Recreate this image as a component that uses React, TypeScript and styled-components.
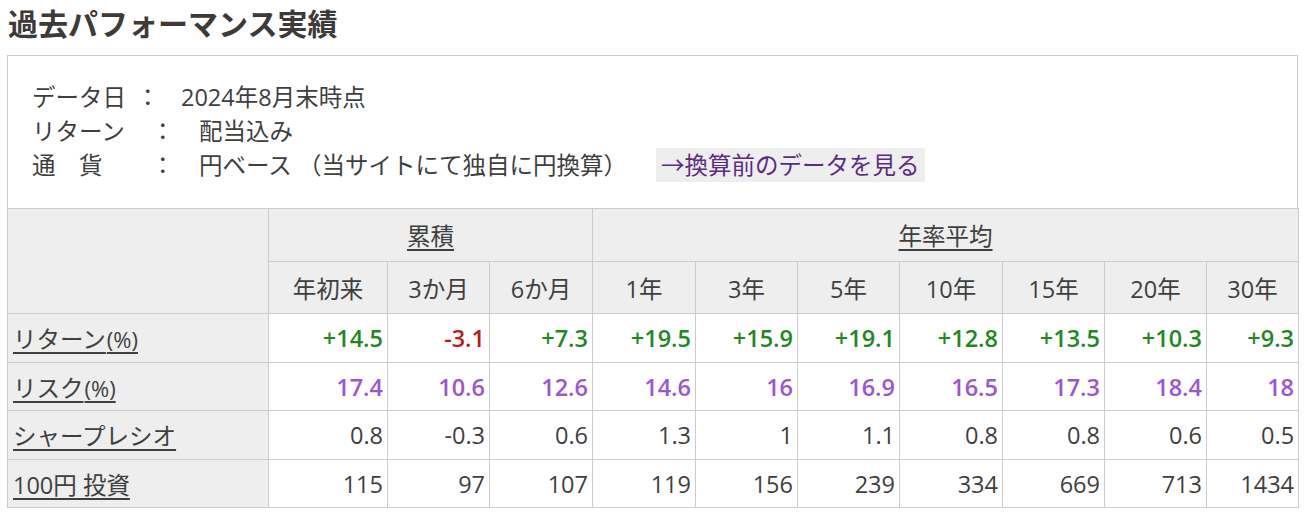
import React from "react";
import styled, { createGlobalStyle } from "styled-components";

const TEXT = "#3f3f3f";
const LINE = "#cccccc";
const SHADE = "#eeeeee";

const GlobalStyle = createGlobalStyle`
  body {
    margin: 0;
    background: #fff;
    font-family: "Open Sans", "Noto Sans CJK JP", sans-serif;
    color: ${TEXT};
  }
`;

const Page = styled.div`
  padding: 4px 12px 0 7px;
`;

const Title = styled.h2`
  margin: 0 0 11px 1px;
  font-size: 30px;
  line-height: 40px;
  font-weight: 700;
  color: #3d3a38;
`;

const InfoBox = styled.div`
  border: 1px solid ${LINE};
  border-bottom: none;
  padding: 24px 24px 26px;
  font-size: 23.5px;
  line-height: 34px;
`;

const InfoLine = styled.div`
  display: flex;
  align-items: center;
  white-space: pre;
`;

const InfoName = styled.span<{ $w: number }>`
  width: ${(p) => p.$w}px;
  flex: none;
`;

const Colon = styled.span<{ $w: number }>`
  width: ${(p) => p.$w}px;
  flex: none;
`;

const ConvertLink = styled.a`
  margin-left: 29px;
  padding: 0 6px 0 5px;
  background: ${SHADE};
  color: #5b2c86;
  text-decoration: none;
  line-height: 34px;
`;

const Table = styled.table`
  width: 1291px;
  border-collapse: collapse;
  table-layout: fixed;
  font-size: 23.5px;
`;

const Th = styled.th<{ $h: number }>`
  height: ${(p) => p.$h}px;
  padding: 0;
  border: 1px solid ${LINE};
  background: ${SHADE};
  font-weight: 400;
  text-align: center;
  color: ${TEXT};
`;

const GroupLink = styled.span`
  text-decoration: underline;
  text-underline-offset: 4px;
`;

const RowHead = styled.th<{ $h: number }>`
  height: ${(p) => p.$h}px;
  padding: 0 0 0 5px;
  border: 1px solid ${LINE};
  background: ${SHADE};
  font-weight: 400;
  text-align: left;
  color: ${TEXT};
  text-decoration: underline;
  text-underline-offset: 4px;
`;

const Unit = styled.span`
  font-size: 22px;
  margin-left: 1px;
`;

const Td = styled.td<{ $tone: "up" | "down" | "risk" | "plain" }>`
  padding: 0 4px 0 0;
  border: 1px solid ${LINE};
  text-align: right;
  font-weight: ${(p) => (p.$tone === "plain" ? 400 : 600)};
  color: ${(p) =>
    p.$tone === "up"
      ? "#22891f"
      : p.$tone === "down"
      ? "#c21818"
      : p.$tone === "risk"
      ? "#9b55d6"
      : TEXT};
`;

const widths = [261, 119, 102, 103, 103, 102, 102, 103, 102, 102, 92];
const periods = ["年初来", "3か月", "6か月", "1年", "3年", "5年", "10年", "15年", "20年", "30年"];

const returns = ["+14.5", "-3.1", "+7.3", "+19.5", "+15.9", "+19.1", "+12.8", "+13.5", "+10.3", "+9.3"];
const risks = ["17.4", "10.6", "12.6", "14.6", "16", "16.9", "16.5", "17.3", "18.4", "18"];
const sharpe = ["0.8", "-0.3", "0.6", "1.3", "1", "1.1", "0.8", "0.8", "0.6", "0.5"];
const invest = ["115", "97", "107", "119", "156", "239", "334", "669", "713", "1434"];

export default function App() {
  return (
    <Page>
      <GlobalStyle />
      <Title>過去パフォーマンス実績</Title>
      <InfoBox>
        <InfoLine>
          <InfoName $w={104}>データ日</InfoName>
          <Colon $w={45}>：</Colon>
          <span>2024年8月末時点</span>
        </InfoLine>
        <InfoLine>
          <InfoName $w={119}>リターン</InfoName>
          <Colon $w={48}>：</Colon>
          <span>配当込み</span>
        </InfoLine>
        <InfoLine>
          <InfoName $w={119}>通　貨</InfoName>
          <Colon $w={48}>：</Colon>
          <span>円ベース （当サイトにて独自に円換算）</span>
          <ConvertLink href="#">→換算前のデータを見る</ConvertLink>
        </InfoLine>
      </InfoBox>
      <Table>
        <colgroup>
          {widths.map((w, i) => (
            <col key={i} style={{ width: w }} />
          ))}
        </colgroup>
        <thead>
          <tr>
            <Th $h={52} rowSpan={2} />
            <Th $h={52} colSpan={3}>
              <GroupLink>累積</GroupLink>
            </Th>
            <Th $h={52} colSpan={7}>
              <GroupLink>年率平均</GroupLink>
            </Th>
          </tr>
          <tr>
            {periods.map((p) => (
              <Th $h={51} key={p}>
                {p}
              </Th>
            ))}
          </tr>
        </thead>
        <tbody>
          <tr>
            <RowHead $h={48}>
              リターン<Unit>(%)</Unit>
            </RowHead>
            {returns.map((v, i) => (
              <Td key={i} $tone={v.startsWith("-") ? "down" : "up"}>
                {v}
              </Td>
            ))}
          </tr>
          <tr>
            <RowHead $h={47}>
              リスク<Unit>(%)</Unit>
            </RowHead>
            {risks.map((v, i) => (
              <Td key={i} $tone="risk">
                {v}
              </Td>
            ))}
          </tr>
          <tr>
            <RowHead $h={48}>シャープレシオ</RowHead>
            {sharpe.map((v, i) => (
              <Td key={i} $tone="plain">
                {v}
              </Td>
            ))}
          </tr>
          <tr>
            <RowHead $h={47}>100円 投資</RowHead>
            {invest.map((v, i) => (
              <Td key={i} $tone="plain">
                {v}
              </Td>
            ))}
          </tr>
        </tbody>
      </Table>
    </Page>
  );
}
